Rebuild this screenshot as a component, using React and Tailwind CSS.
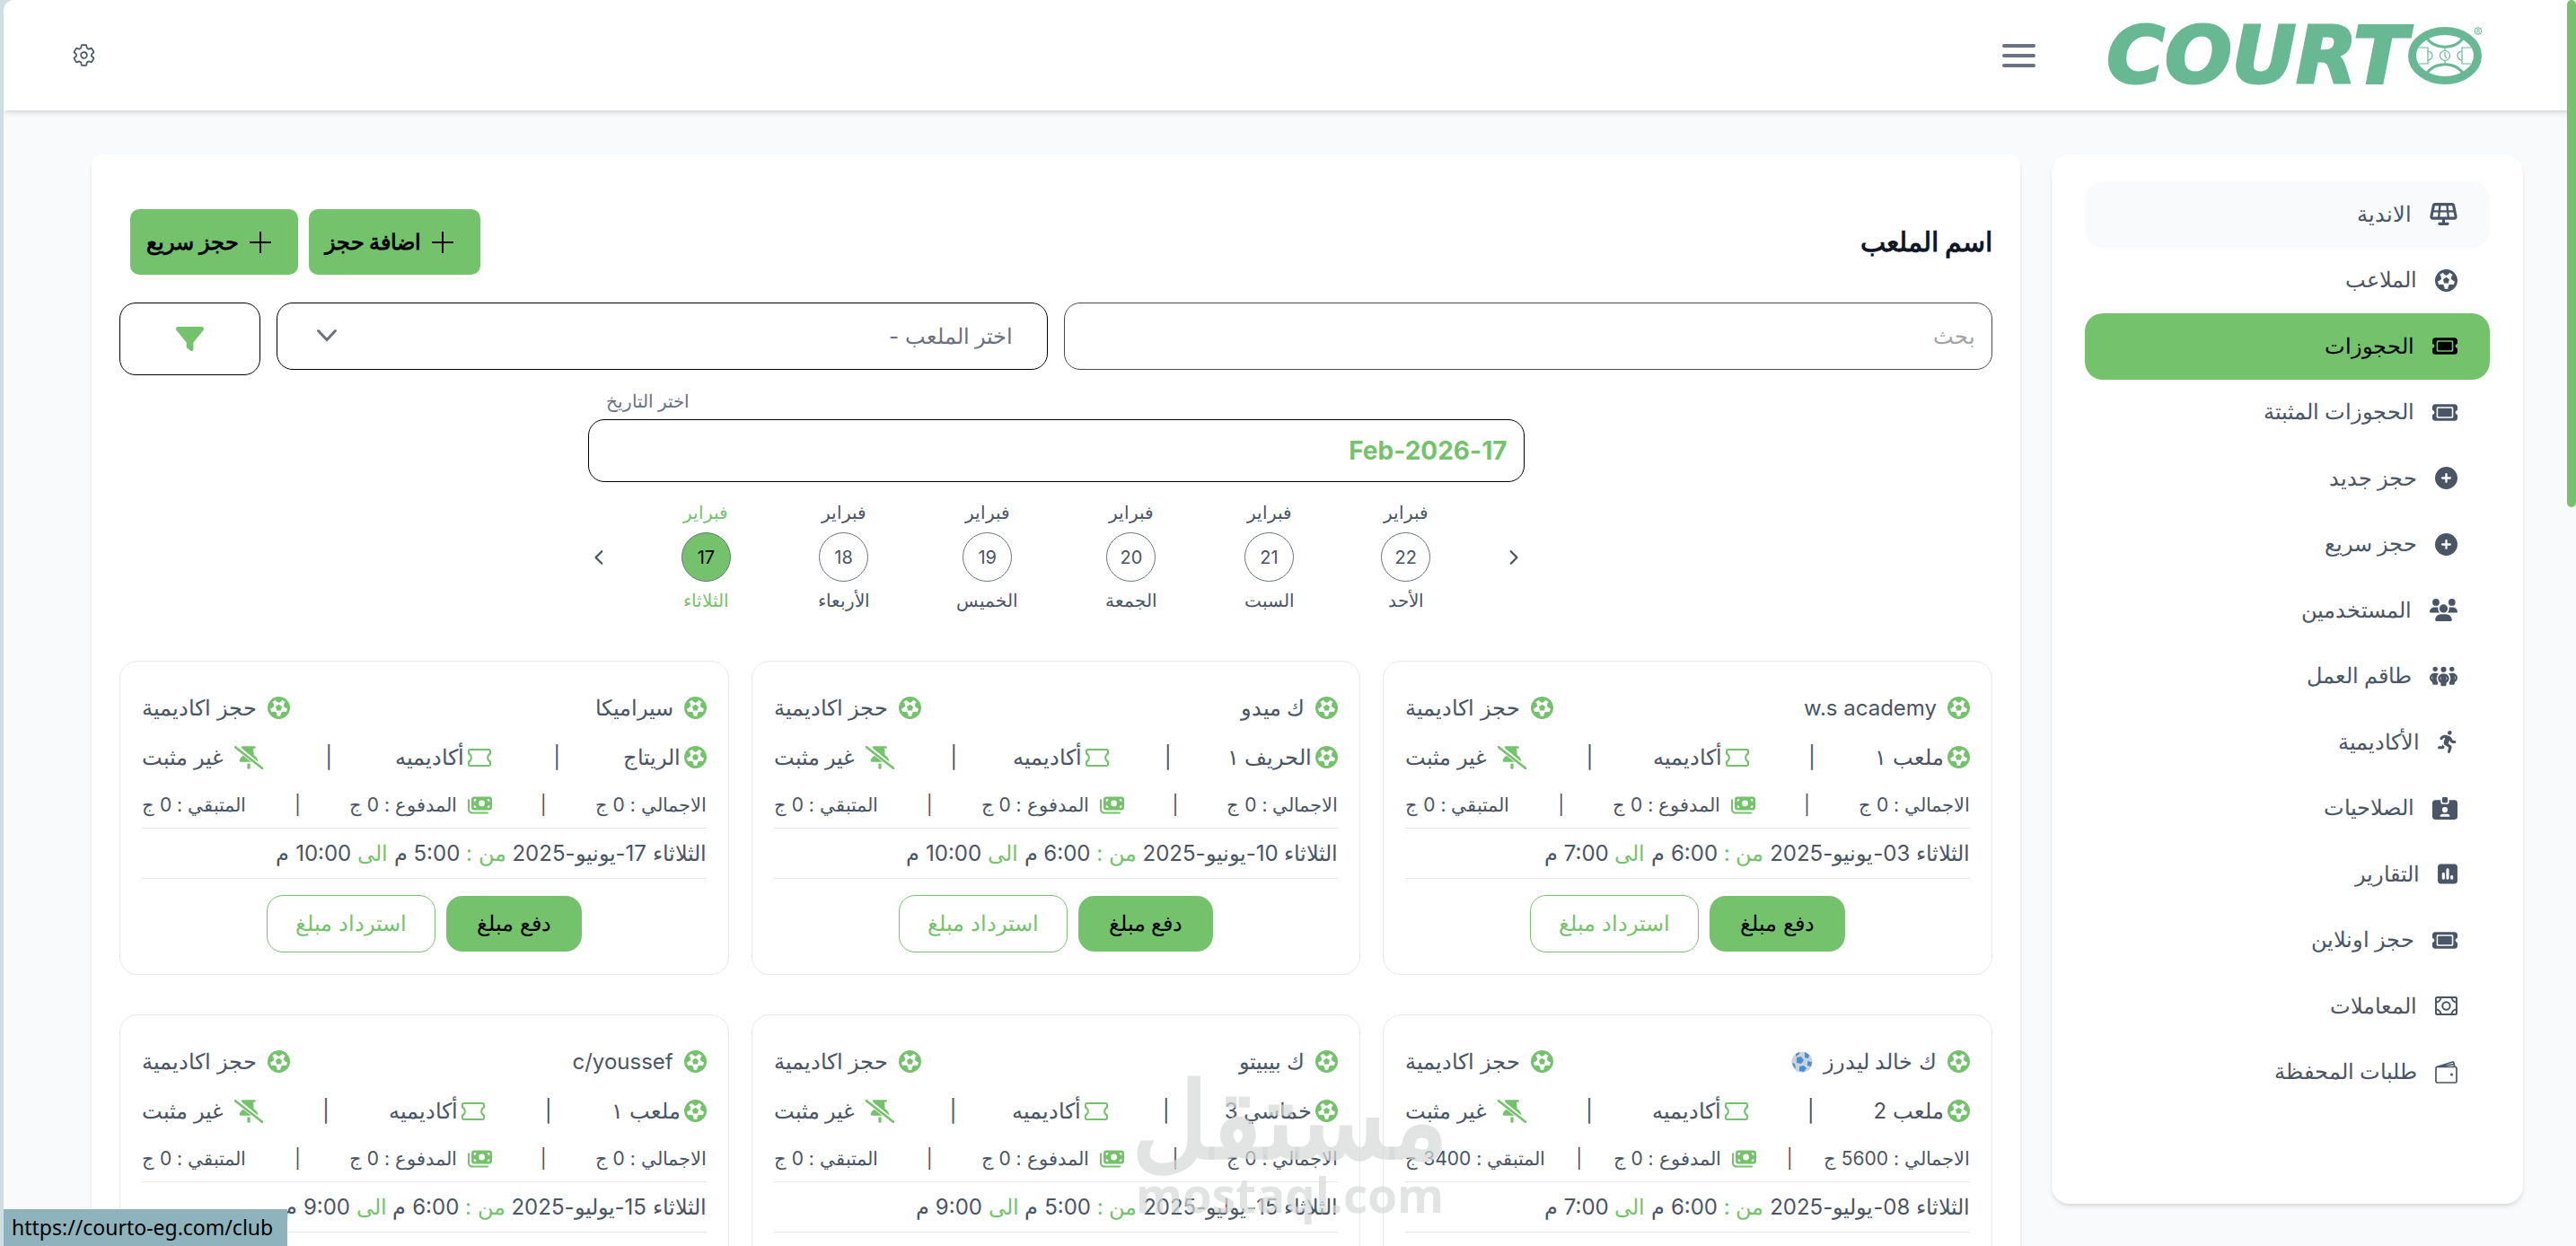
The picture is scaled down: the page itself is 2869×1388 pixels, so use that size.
import React, { useState } from "react";
import {
  FaSolarPanel,
  FaTicket,
  FaCirclePlus,
  FaUsers,
  FaPeopleGroup,
  FaPersonRunning,
  FaIdCardClip,
  FaSquarePollVertical,
  FaMoneyBills,
  FaFilter,
  FaChevronLeft,
  FaChevronRight,
} from "react-icons/fa6";
import { IoSettingsOutline } from "react-icons/io5";

const BallIcon = () => (
  <svg viewBox="0 0 50 50" className="h-[25px] w-[25px] shrink-0" fill="currentColor">
    <circle cx="25" cy="25" r="22" fill="none" stroke="currentColor" strokeWidth="6" />
    <path d="M25 17.500l7 5-2.500 8.500h-9L18 22.500z" />
    <path d="M16 4h18l-3 6-6 4-6-4z" />
    <path d="M16 4h18l-3 6-6 4-6-4z" transform="rotate(72 25 25)" />
    <path d="M16 4h18l-3 6-6 4-6-4z" transform="rotate(144 25 25)" />
    <path d="M16 4h18l-3 6-6 4-6-4z" transform="rotate(216 25 25)" />
    <path d="M16 4h18l-3 6-6 4-6-4z" transform="rotate(288 25 25)" />
  </svg>
);

const CashIcon = () => (
  <svg viewBox="0 0 25 25" className="h-[25px] w-[25px]" fill="none" stroke="currentColor" strokeWidth="2">
    <rect x="1" y="3" width="23" height="19" rx="1.5" />
    <circle cx="12.5" cy="12.5" r="4.2" />
    <path d="M1 8.5A5.5 5.5 0 0 0 6.5 3M18.5 3A5.5 5.5 0 0 0 24 8.5M24 16.5A5.5 5.5 0 0 0 18.5 22M6.5 22A5.5 5.5 0 0 0 1 16.5" />
  </svg>
);

const WalletIcon = () => (
  <svg viewBox="0 0 25 25" className="h-[25px] w-[25px]" fill="none" stroke="currentColor" strokeWidth="1.700" strokeLinejoin="round">
    <rect x="1" y="6.500" width="23" height="17.500" rx="1.500" />
    <path d="M2 6.500L19.500 1a1 1 0 0 1 1.300.700L21.800 6.500M5 6.500l15.500-3" />
    <circle cx="18.500" cy="15" r="1.500" fill="currentColor" stroke="none" />
  </svg>
);

const TicketOutline = () => (
  <svg viewBox="0 0 26 20" className="h-5 w-[26px] text-[#75c26d]" fill="none" stroke="currentColor" strokeWidth="2">
    <path d="M2.500 1h21A1.500 1.500 0 0 1 25 2.500V5.500a5 5 0 0 0 0 9v3a1.500 1.500 0 0 1-1.500 1.500h-21A1.500 1.500 0 0 1 1 17.500V14.500a5 5 0 0 0 0-9V2.500A1.500 1.500 0 0 1 2.500 1z" />
  </svg>
);

const PinOff = () => (
  <svg viewBox="0 0 640 512" className="h-[26px] w-8 text-[#75c26d]" fill="currentColor">
    <path d="M190 0h260a24 24 0 0 1 0 52h-28l12 150c40 21 72 55 86 98l4 14a30 30 0 0 1-4 28L178 60v-8a26 26 0 0 1 12-52z" />
    <path d="M206 212l190 140H146a30 30 0 0 1-30-40l4-12c14-38 46-68 86-88z" />
    <path d="M288 384h64v96a32 32 0 0 1-64 0z" />
    <path d="M20 22L620 492" stroke="white" strokeWidth="80" />
    <path d="M20 22L620 492" stroke="currentColor" strokeWidth="54" strokeLinecap="round" />
  </svg>
);

const PlusIcon = () => (
  <svg viewBox="0 0 24 24" className="h-6 w-6" fill="none" stroke="currentColor" strokeWidth="2">
    <path d="M12 0v24M0 12h24" />
  </svg>
);

const BlueBall = () => (
  <svg viewBox="0 0 24 24" className="h-6 w-6">
    <circle cx="12" cy="12" r="11.500" fill="#c9d3de" />
    <path d="M6 7l5-1 3 4-3 4-5-1z M15 1l5 3-1 4-4-1z M18 11l5 1-1 5-4-1z M9 17l5-1 3 3-3 4-5-1z M1 13l3 1 1 5-2-1z M5 3l4-2 0 2-4 3z" fill="#4a8fd6" />
  </svg>
);

const LogoBall = () => (
  <svg viewBox="0 0 84 64" className="h-16 w-[84px]" fill="none" stroke="currentColor">
    <ellipse cx="42" cy="32" rx="36.500" ry="27.500" strokeWidth="9" />
    <path d="M21 11C30 26 54 26 63 11M21 53C30 38 54 38 63 53" strokeWidth="3" />
    <path d="M13 23h10v18H13M71 23H61v18h10M42 22v5M42 37v5" strokeWidth="1.200" />
    <path d="M23 27a5 5 0 0 1 0 10M61 27a5 5 0 0 0 0 10" strokeWidth="1.200" />
    <circle cx="42" cy="32" r="5.500" strokeWidth="1.200" />
    <path d="M42 28v4l2 3" strokeWidth="1.200" />
    <circle cx="79" cy="4.500" r="3.800" strokeWidth="1" />
    <path d="M78 7V2.500h1.500a1 1 0 0 1 0 2H78m1.500 0L81 7" strokeWidth="0.800" />
  </svg>
);

const navItems = [
  { label: "الاندية", icon: <FaSolarPanel className="h-[25px] w-[31px]" />, hovered: true },
  { label: "الملاعب", icon: <BallIcon /> },
  { label: "الحجوزات", icon: <FaTicket className="h-[25px] w-7" />, active: true },
  { label: "الحجوزات المثبتة", icon: <FaTicket className="h-[25px] w-7" /> },
  { label: "حجز جديد", icon: <FaCirclePlus className="h-[25px] w-[25px]" /> },
  { label: "حجز سريع", icon: <FaCirclePlus className="h-[25px] w-[25px]" /> },
  { label: "المستخدمين", icon: <FaUsers className="h-[25px] w-[31px]" /> },
  { label: "طاقم العمل", icon: <FaPeopleGroup className="h-[25px] w-[31px]" /> },
  { label: "الأكاديمية", icon: <FaPersonRunning className="h-[25px] w-[22px]" /> },
  { label: "الصلاحيات", icon: <FaIdCardClip className="h-[25px] w-7" /> },
  { label: "التقارير", icon: <FaSquarePollVertical className="h-[25px] w-[22px]" /> },
  { label: "حجز اونلاين", icon: <FaTicket className="h-[25px] w-7" /> },
  { label: "المعاملات", icon: <CashIcon /> },
  { label: "طلبات المحفظة", icon: <WalletIcon /> },
];

const days = [
  { num: 22, name: "الأحد" },
  { num: 21, name: "السبت" },
  { num: 20, name: "الجمعة" },
  { num: 19, name: "الخميس" },
  { num: 18, name: "الأربعاء" },
  { num: 17, name: "الثلاثاء" },
];

const bookings = [
  { name: "w.s academy", field: "ملعب ١", total: 0, rest: 0, date: "03-يونيو-2025", from: "6:00", to: "7:00" },
  { name: "ك ميدو", field: "الحريف ١", total: 0, rest: 0, date: "10-يونيو-2025", from: "6:00", to: "10:00" },
  { name: "سيراميكا", field: "الريتاج", total: 0, rest: 0, date: "17-يونيو-2025", from: "5:00", to: "10:00" },
  { name: "ك خالد ليدرز", ball: true, field: "ملعب 2", total: 5600, rest: 3400, date: "08-يوليو-2025", from: "6:00", to: "7:00" },
  { name: "ك بيبيتو", field: "خماسي 3", total: 0, rest: 0, date: "15-يوليو-2025", from: "5:00", to: "9:00" },
  { name: "c/youssef", field: "ملعب ١", total: 0, rest: 0, date: "15-يوليو-2025", from: "6:00", to: "9:00" },
];

const BookingCard = ({ booking }) => (
  <div className="rounded-[20px] border border-gray-200 px-6 pt-6 pb-6">
    <div className="flex h-[55px] items-center justify-between text-2xl">
      <span className="flex items-center gap-3">
        <span className="text-[#75c26d]">
          <BallIcon />
        </span>
        {booking.name}
        {booking.ball && <BlueBall />}
      </span>
      <span className="flex items-center gap-3">
        <span className="text-[#75c26d]">
          <BallIcon />
        </span>
        حجز اكاديمية
      </span>
    </div>
    <div className="flex h-[55px] items-center justify-between text-2xl">
      <span className="flex items-center gap-1">
        <span className="text-[#75c26d]">
          <BallIcon />
        </span>
        {booking.field}
      </span>
      <span>|</span>
      <span className="flex items-center gap-1">
        <TicketOutline />
        أكاديميه
      </span>
      <span>|</span>
      <span className="flex items-center gap-3">
        <PinOff />
        غير مثبت
      </span>
    </div>
    <div className="flex h-[52px] items-center justify-between border-b border-gray-200 text-[21px]">
      <span>الاجمالي : {booking.total} ج</span>
      <span>|</span>
      <span className="flex items-center gap-3">
        <FaMoneyBills className="h-[22px] w-[27px] text-[#75c26d]" />
        المدفوع : 0 ج
      </span>
      <span>|</span>
      <span>المتبقي : {booking.rest} ج</span>
    </div>
    <div className="flex h-14 items-center border-b border-gray-200 text-2xl">
      <p>
        الثلاثاء {booking.date} <span className="text-[#75c26d]">من :</span> {booking.from} م{" "}
        <span className="text-[#75c26d]">الى</span> {booking.to} م
      </p>
    </div>
    <div className="mt-[18px] flex items-center justify-center gap-3 text-2xl">
      <button type="button" className="h-[62px] rounded-[18px] bg-[#75c26d] px-[34px] text-black">
        دفع مبلغ
      </button>
      <button type="button" className="h-16 rounded-[18px] border border-[#75c26d] px-[31px] text-[#75c26d]">
        استرداد مبلغ
      </button>
    </div>
  </div>
);

const App = () => {
  const [search, setSearch] = useState("");
  const [date, setDate] = useState("17-Feb-2026");
  const [selected, setSelected] = useState(17);

  return (
    <div className="relative h-screen overflow-hidden bg-[#cddfe3] pl-1" dir="rtl">
      <div className="h-full overflow-hidden rounded-tl-xl bg-[#f9fafb] font-['Inter','Noto_Sans',sans-serif] text-gray-600">
        <header className="flex h-[123px] items-center justify-between bg-white pr-[104px] pl-[76px] shadow-md">
          <div className="flex items-center gap-[52px]">
            <a
              href="#home"
              aria-label="COURTO"
              className="flex w-[446px] items-center justify-end text-[#68b894]"
              dir="ltr"
            >
              <span className="font-['DejaVu_Sans',sans-serif] text-[88px] leading-[64px] font-bold italic [-webkit-text-stroke:3px_#68b894]">
                COURT
              </span>
              <LogoBall />
            </a>
            <button type="button" aria-label="القائمة" className="flex flex-col gap-[7px]">
              <span className="h-1 w-[37px] rounded bg-gray-500" />
              <span className="h-1 w-[37px] rounded bg-gray-500" />
              <span className="h-1 w-[37px] rounded bg-gray-500" />
            </button>
          </div>
          <button type="button" aria-label="الاعدادات">
            <IoSettingsOutline className="text-[27px]" />
          </button>
        </header>

        <div className="flex items-start gap-[35px] pt-[49px] pr-[59px] pl-[98px]">
          <aside className="w-[525px] shrink-0 rounded-[20px] bg-white px-[37px] pt-[30px] pb-[110px] shadow-md">
            <nav>
              <ul className="flex h-[1029px] flex-col">
                {navItems.map((item) => (
                  <li key={item.label} className="flex-1">
                    <a
                      href="#section"
                      className={`flex h-full items-center gap-5 rounded-[20px] px-9 text-2xl font-medium ${item.active ? "bg-[#75c26d] text-black" : item.hovered ? "bg-slate-50" : ""}`}
                    >
                      {item.icon}
                      {item.label}
                    </a>
                  </li>
                ))}
              </ul>
            </nav>
          </aside>

          <main className="min-w-0 flex-1 rounded-xl bg-white px-[31px] pt-[61px] pb-10 shadow-md">
            <div className="flex h-[73px] items-center justify-between pl-3">
              <h1 className="text-[30px] font-bold text-gray-900">اسم الملعب</h1>
              <div className="flex gap-3 text-2xl font-bold text-black">
                <button type="button" className="flex h-[73px] items-center gap-3 rounded-[10px] bg-[#75c26d] pr-[30px] pl-[18px]">
                  <PlusIcon />
                  اضافة حجز
                </button>
                <button type="button" className="flex h-[73px] items-center gap-3 rounded-[10px] bg-[#75c26d] pr-[30px] pl-[18px]">
                  <PlusIcon />
                  حجز سريع
                </button>
              </div>
            </div>

            <div className="mt-[31px] grid grid-cols-[1034fr_858fr_157fr] items-start gap-[18px] text-2xl">
              <input
                type="text"
                aria-label="بحث"
                placeholder="بحث"
                value={search}
                onChange={(e) => setSearch(e.target.value)}
                className="h-[75px] rounded-[18px] border border-[#4a4a4a] px-[18px] placeholder:text-[#a3a3a3]"
              />
              <div className="relative">
                <select
                  aria-label="اختر الملعب"
                  className="h-[75px] w-full appearance-none rounded-[18px] border border-black px-[37px] text-gray-500"
                >
                  <option>اختر الملعب -</option>
                </select>
                <svg
                  viewBox="0 0 24 24"
                  className="pointer-events-none absolute top-6 left-11 h-6 w-6 text-gray-500"
                  fill="none"
                  stroke="currentColor"
                  strokeWidth="3"
                  strokeLinecap="round"
                >
                  <path d="M2.500 7.500L12 17.500L21.500 7.500" />
                </svg>
              </div>
              <button
                type="button"
                aria-label="تصفية"
                className="flex h-[81px] items-center justify-center rounded-[18px] border border-black text-[#75c26d]"
              >
                <FaFilter className="text-[31px]" />
              </button>
            </div>

            <div className="mx-auto w-1/2 pt-[11px]">
              <label htmlFor="date" className="block pl-5 text-left text-xl leading-9 font-medium text-gray-500">
                اختر التاريخ
              </label>
              <input
                id="date"
                type="text"
                value={date}
                onChange={(e) => setDate(e.target.value)}
                className="mt-[2px] h-[70px] w-full rounded-[18px] border border-black px-[18px] text-[28px] font-bold text-[#75c26d]"
              />
              <div className="mt-4 flex items-center text-xl">
                <button type="button" aria-label="السابق" className="w-14 pr-[6px]">
                  <FaChevronRight className="h-[18px] w-[14px]" />
                </button>
                <div className="flex flex-1 justify-around">
                  {days.map((day) => (
                    <button
                      type="button"
                      key={day.num}
                      onClick={() => setSelected(day.num)}
                      className={`flex flex-col items-center ${selected === day.num ? "text-[#75c26d]" : ""}`}
                    >
                      <span className="h-10 leading-9">فبراير</span>
                      <span
                        className={`flex h-[55px] w-[55px] items-center justify-center rounded-full border border-gray-500 ${selected === day.num ? "bg-[#75c26d] text-black" : ""}`}
                      >
                        {day.num}
                      </span>
                      <span className="h-10 leading-[42px]">{day.name}</span>
                    </button>
                  ))}
                </div>
                <button type="button" aria-label="التالي" className="flex w-14 justify-end pl-[6px]">
                  <FaChevronLeft className="h-[18px] w-[14px]" />
                </button>
              </div>
            </div>

            <div className="mt-12 grid grid-cols-3 gap-x-[25px] gap-y-11">
              {bookings.map((booking) => (
                <BookingCard key={booking.name} booking={booking} />
              ))}
            </div>
          </main>
        </div>
      </div>

      {/* page scrollbar */}
      <div className="absolute top-0 right-0 h-[565px] w-[10px] rounded-full bg-[#75c26d]" />

      {/* watermark */}
      <div className="pointer-events-none absolute top-[1186px] left-[1260px] flex flex-col items-center font-bold text-[#d5d8d8]/70">
        <span className="font-['Noto_Sans',sans-serif] text-[118px] leading-[118px]">مستقل</span>
        <span className="font-['Open_Sans',sans-serif] text-[53px] leading-[53px]" dir="ltr">
          mostaql.com
        </span>
      </div>

      {/* link target shown while hovering */}
      <div
        className="absolute bottom-0 left-1 flex h-[41px] items-center bg-[#8fb3bc] pr-4 pl-[9px] font-['Noto_Sans',sans-serif] text-[23px] text-black"
        dir="ltr"
      >
        https://courto-eg.com/club
      </div>
    </div>
  );
};

export default App;
